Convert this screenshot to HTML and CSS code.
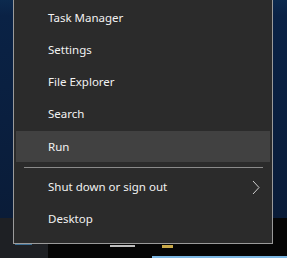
FILE: index.html
```html
<!DOCTYPE html>
<html lang="en">
<head>
    <meta charset="UTF-8">
    <meta name="viewport" content="width=device-width, initial-scale=1.0">
    <title>Quick Link Menu</title>
    <link rel="stylesheet" href="styles.css">
</head>
<body>

    <div class="desktop"></div>

    <div class="taskbar">
        <div class="start-button"><span class="start-logo"></span></div>
        <div class="task-icons">
            <span class="task-icon gray"></span>
            <span class="task-icon folder"></span>
        </div>
        <div class="active-bar"></div>
    </div>

    <ul class="menu">
        <li class="menu-item">Task Manager</li>
        <li class="menu-item">Settings</li>
        <li class="menu-item">File Explorer</li>
        <li class="menu-item">Search</li>
        <li class="menu-item hover">Run</li>
        <li class="separator"></li>
        <li class="menu-item">
            Shut down or sign out
            <svg class="chevron" width="8" height="15" viewBox="0 0 8 15">
                <path d="M1 1 L7 7.5 L1 14" fill="none" stroke="#cfcfcf" stroke-width="1"/>
            </svg>
        </li>
        <li class="menu-item">Desktop</li>
    </ul>

</body>
</html>
```

FILE: styles.css
```css
body {
    margin: 0;
    width: 287px;
    height: 258px;
    overflow: hidden;
    position: relative;
    font-family: "Segoe UI", "Noto Sans", sans-serif;
    background-color: #000;
}
.desktop {
    height: 218px;
    background: linear-gradient(180deg, #0c2a4e 0px, #0a2245 16px, #0a1f3f 120px, #0a1c38 218px);
}
.taskbar {
    height: 40px;
    display: flex;
    position: relative;
    background-color: #060606;
}
.start-button {
    width: 48px;
    background-color: #1e2024;
}
.start-logo {
    display: block;
    margin: 25px 0 0 15px;
    width: 17px;
    height: 2px;
    background-color: #3d6f95;
}
.task-icons {
    display: flex;
    gap: 27px;
    padding-left: 62px;
}
.task-icon {
    display: block;
    margin-top: 27px;
    height: 2px;
}
.task-icon.gray {
    width: 25px;
    background-color: #bdbdbd;
}
.task-icon.folder {
    width: 11px;
    height: 3px;
    background-color: #c9a94a;
}
.active-bar {
    position: absolute;
    left: 152px;
    right: 0;
    bottom: 0;
    height: 2px;
    background-color: #7cb7e3;
}
.menu {
    position: absolute;
    left: 13px;
    bottom: 14px;
    width: 258px;
    margin: 0;
    padding: 3px 0 8px 0;
    list-style: none;
    background-color: #2b2b2b;
    border: 1px solid #9b9b9b;
    border-top: none;
    color: #f2f2f2;
    font-size: 11.5px;
}
.menu-item {
    height: 32px;
    line-height: 32px;
    margin: 0 2px;
    padding-left: 32px;
    display: flex;
    align-items: center;
    justify-content: space-between;
    padding-right: 10px;
}
.menu-item.hover {
    background-color: #414141;
    height: 31px;
    margin-top: 1px;
}
.separator {
    height: 1px;
    margin: 5px 9px 3px 10px;
    background-color: #8a8a8a;
}
.chevron {
    display: block;
}
```
